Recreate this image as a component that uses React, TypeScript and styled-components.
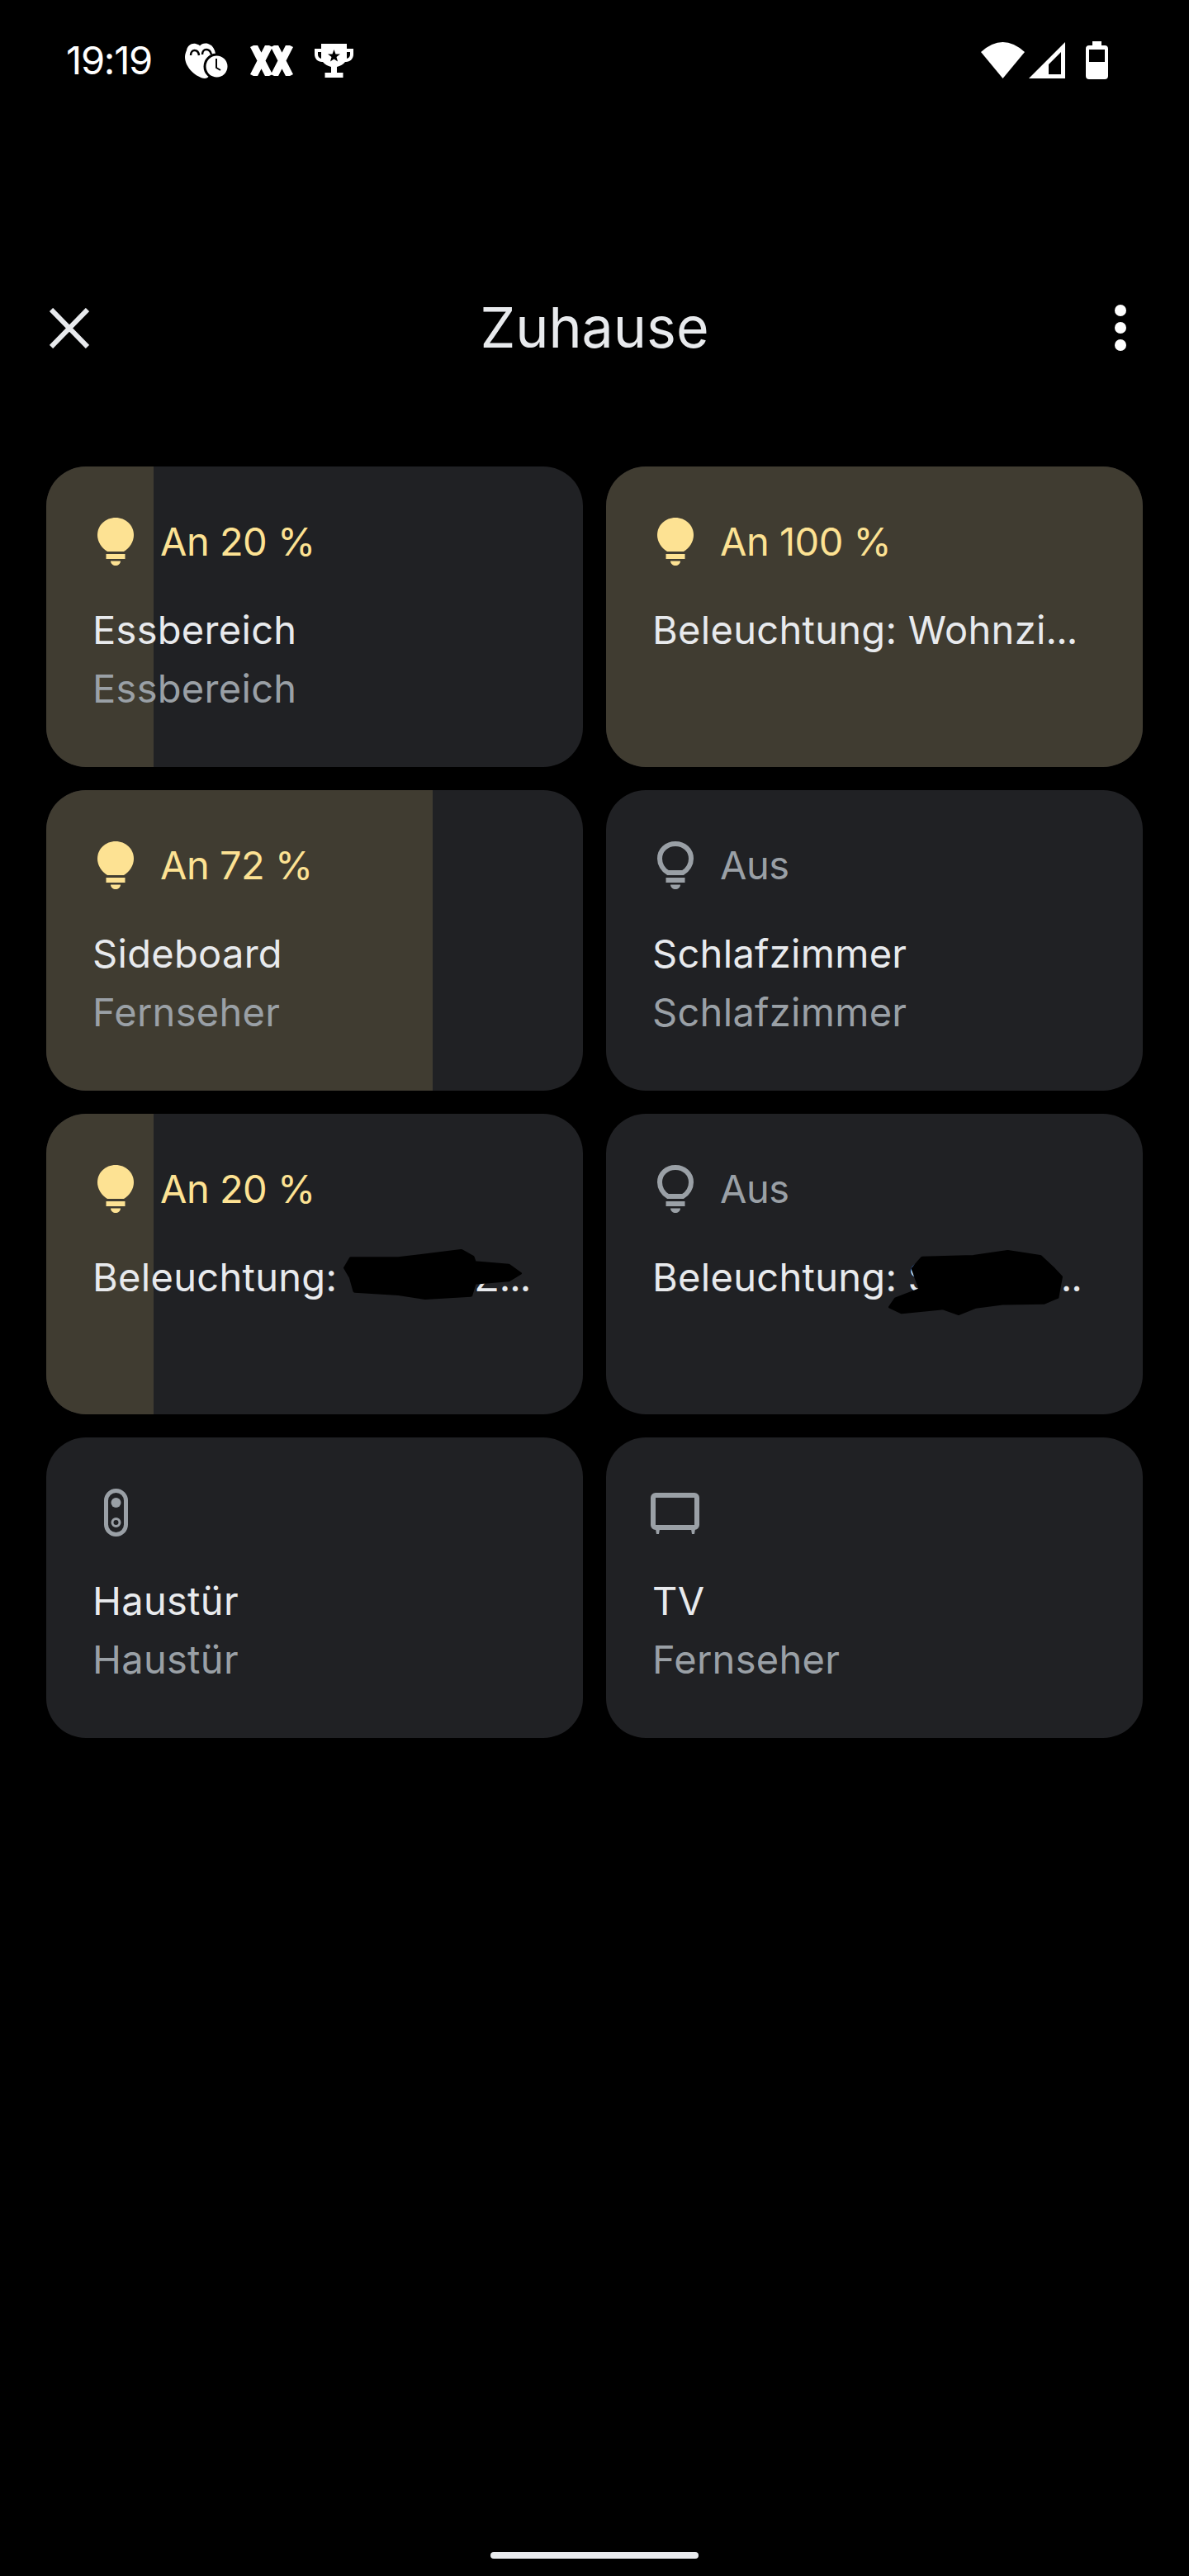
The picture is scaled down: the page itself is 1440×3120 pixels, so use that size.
import React, { FC, ReactNode } from 'react';
import styled, { createGlobalStyle } from 'styled-components';

const GlobalStyle = createGlobalStyle`
    html, body {
        margin: 0;
        padding: 0;
        background: #000;
    }
    body {
        font-family: Inter, Roboto, sans-serif;
    }
`;

const Page = styled.div`
    width: 1440px;
    height: 3120px;
    display: flex;
    flex-direction: column;
    background: #000;
    overflow: hidden;
`;

const StatusBar = styled.div`
    height: 146px;
    display: flex;
    align-items: center;
    justify-content: space-between;
    padding: 0 98px 0 80px;
    flex-shrink: 0;
`;

const StatusGroup = styled.div`
    display: flex;
    align-items: center;
    gap: 26px;
`;

const SystemIcons = styled.div`
    display: flex;
    align-items: center;
    gap: 5px;

    svg:last-child {
        margin-left: 20px;
    }
`;

const Time = styled.span`
    font-size: 47px;
    line-height: 48px;
    letter-spacing: -1.2px;
    color: #fff;
    width: 105px;
    margin-right: 13px;
    white-space: nowrap;
`;

const Header = styled.header`
    height: 120px;
    margin: 191px 0 108px;
    padding: 0 60px;
    display: grid;
    grid-template-columns: 1fr auto 1fr;
    align-items: center;
`;

const Title = styled.h1`
    margin: 0 0 2px;
    font-size: 68px;
    line-height: 118px;
    font-weight: 400;
    color: #e8eaed;
`;

const MenuDots = styled.div`
    justify-self: end;
    margin-right: 16px;
    display: flex;
    flex-direction: column;
    gap: 7px;
`;

const Dot = styled.span`
    width: 14px;
    height: 14px;
    border-radius: 50%;
    background: #fff;
`;

const Grid = styled.div`
    display: grid;
    grid-template-columns: 650px 650px;
    grid-auto-rows: 364px;
    gap: 28px;
    padding: 0 56px;
`;

const CardBox = styled.div`
    position: relative;
    overflow: hidden;
    border-radius: 48px;
    background: #202124;
`;

const LevelFill = styled.div<{ $level: number }>`
    position: absolute;
    top: 0;
    bottom: 0;
    left: 0;
    width: ${p => p.$level}%;
    background: #403c31;
`;

const CardContent = styled.div`
    position: relative;
    display: flex;
    flex-direction: column;
    padding: 55px 56px 0;
`;

const StateRow = styled.div`
    height: 72px;
    display: flex;
    align-items: center;
    gap: 16px;
    margin-bottom: 35px;

    svg {
        margin-left: -6px;
        flex-shrink: 0;
    }
`;

const StateText = styled.span<{ $on: boolean }>`
    font-size: 47px;
    line-height: 72px;
    letter-spacing: -0.5px;
    color: ${p => (p.$on ? '#fde293' : '#9aa0a6')};
    white-space: nowrap;
`;

const Name = styled.div`
    font-size: 47px;
    line-height: 71px;
    letter-spacing: 0.3px;
    color: #e8eaed;
    white-space: nowrap;
`;

const Room = styled(Name)`
    color: #9aa0a6;
`;

const Dots = styled.span`
    letter-spacing: -1px;
`;

const RedactedGap = styled.span<{ $width: number }>`
    display: inline-block;
    width: ${p => p.$width}px;
`;

const Scribble = styled.svg<{ $left: number; $top: number }>`
    position: absolute;
    left: ${p => p.$left}px;
    top: ${p => p.$top}px;
    overflow: visible;
`;

const HomeBar = styled.div`
    width: 252px;
    height: 8px;
    border-radius: 4px;
    background: #e8eaed;
    margin: auto auto 21px;
    flex-shrink: 0;
`;

const Tile: FC<{ size: number; children: ReactNode }> = ({ size, children }) => (
    <svg width={size} height="72" viewBox={`-8 0 ${size} 72`}>{children}</svg>
);

const BulbOn = () => (
    <Tile size={72}>
        <g fill="#fde293">
            <path d="M16 48C9 44 4 36 4 28C4 16 14 7 26 7C38 7 48 16 48 28C48 36 43 44 36 48Z" />
            <rect x="14.5" y="51" width="23" height="6" />
            <path d="M20 59.5H32C32 63 29 65 26 65C23 65 20 63 20 59.5Z" />
        </g>
    </Tile>
);

const BulbOff = () => (
    <Tile size={72}>
        <path
            d="M17 45C11 41.500 7 35 7 28C7 17.500 15.500 10 26 10C36.500 10 45 17.500 45 28C45 35 41 41.500 35 45Z"
            fill="none"
            stroke="#9aa0a6"
            strokeWidth="6"
        />
        <g fill="#9aa0a6">
            <rect x="14.5" y="51" width="23" height="6" />
            <path d="M20 59.500H32C32 63 29 65 26 65C23 65 20 63 20 59.500Z" />
        </g>
    </Tile>
);

const RemoteIcon = () => (
    <Tile size={72}>
        <rect x="14.500" y="9.500" width="24" height="53" rx="12" fill="none" stroke="#9aa0a6" strokeWidth="5" />
        <circle cx="26.500" cy="24" r="6" fill="#9aa0a6" />
        <circle cx="26.500" cy="48" r="4.500" fill="none" stroke="#9aa0a6" strokeWidth="3" />
    </Tile>
);

const TvIcon = () => (
    <Tile size={72}>
        <rect x="-1" y="15" width="53" height="39" rx="3" fill="none" stroke="#9aa0a6" strokeWidth="6" />
        <path d="M2 56H7L6 62H3ZM45 56H50L49 62H46Z" fill="#9aa0a6" />
    </Tile>
);

const CloseIcon = () => (
    <svg width="48" height="49" viewBox="0 0 48 49">
        <path d="M2 2L46 47M46 2L2 47" stroke="#e8eaed" strokeWidth="6" fill="none" />
    </svg>
);

const AlarmFaceIcon = () => (
    <svg width="53" height="43" viewBox="0 0 53 43">
        <path
            d="M2 9C3 3 8 0 13 1C15 1.500 17 2 18 3.500C20 1 24 0 28 1C33 2.500 36 7 37 13C40 20 36 30 33 35C31 39 28 43 24 43C14 42 0 30 0 17C0 14 1 11 2 9Z"
            fill="#fff"
        />
        <path d="M7 15C7 7 16 7 17 15M21 14C21 6 30 6 32 14" fill="none" stroke="#000" strokeWidth="2.500" />
        <circle cx="38.500" cy="28.500" r="14.500" fill="#fff" stroke="#000" strokeWidth="3" />
        <path d="M38 19V30L43 33" fill="none" stroke="#000" strokeWidth="2" />
    </svg>
);

const DoubleXIcon = () => (
    <svg width="52" height="37" viewBox="0 0 52 37">
        <path d="M4 0L23 37M23 0L4 37M29 0L48 37M48 0L29 37" stroke="#fff" strokeWidth="9" fill="none" />
    </svg>
);

const TrophyIcon = () => (
    <svg width="47" height="41" viewBox="0 0 47 41">
        <path
            fillRule="evenodd"
            fill="#fff"
            d="M8 0H39V6H47V13C47 18 43 22 38 22H37C35 25 31 27 27 28V35H34.500V41H12.500V35H20V28C16 27 12 25 10 22H9C4 22 0 18 0 13V6H8ZM4 10V13C4 15.500 5.500 17.500 8 18V10ZM39 10V18C41.500 17.500 43 15.500 43 13V10ZM23.500 7L25.500 12.500H31L26.500 16L28 21.500L23.500 18.500L19 21.500L20.500 16L16 12.500H21.500Z"
        />
    </svg>
);

const WifiIcon = () => (
    <svg width="53" height="44" viewBox="0 0 53 44">
        <path d="M0 12Q26.500 -12 53 12L26.500 44Z" fill="#fff" />
    </svg>
);

const SignalIcon = () => (
    <svg width="44" height="44" viewBox="0 0 44 44">
        <path fillRule="evenodd" fill="#fff" d="M44 0V44H0ZM39 12L24 27V39H39Z" />
    </svg>
);

const BatteryIcon = () => (
    <svg width="27" height="46" viewBox="0 0 27 46">
        <path
            fillRule="evenodd"
            fill="#fff"
            d="M8 0H19V5H23C25.500 5 27 6.500 27 9V42C27 44.500 25.500 46 23 46H4C1.500 46 0 44.500 0 42V9C0 6.500 1.500 5 4 5H8ZM4 10V25H23V10Z"
        />
    </svg>
);

interface CardProps {
    icon: ReactNode;
    state?: string;
    level?: number;
    name: ReactNode;
    room?: string;
    overlay?: ReactNode;
}

const Card: FC<CardProps> = ({ icon, state, level, name, room, overlay }) => (
    <CardBox>
        {level ? <LevelFill $level={level} /> : null}
        <CardContent>
            <StateRow>
                {icon}
                {state && <StateText $on={!!level}>{state}</StateText>}
            </StateRow>
            <Name>{name}</Name>
            {room && <Room>{room}</Room>}
        </CardContent>
        {overlay}
    </CardBox>
);

const App: FC = () => (
    <Page>
        <GlobalStyle />
        <StatusBar>
            <StatusGroup>
                <Time>19:19</Time>
                <AlarmFaceIcon />
                <DoubleXIcon />
                <TrophyIcon />
            </StatusGroup>
            <SystemIcons>
                <WifiIcon />
                <SignalIcon />
                <BatteryIcon />
            </SystemIcons>
        </StatusBar>

        <Header>
            <CloseIcon />
            <Title>Zuhause</Title>
            <MenuDots>
                <Dot />
                <Dot />
                <Dot />
            </MenuDots>
        </Header>

        <Grid>
            <Card icon={<BulbOn />} state="An 20 %" level={20} name="Essbereich" room="Essbereich" />
            <Card icon={<BulbOn />} state="An 100 %" level={100} name={<>Beleuchtung: Wohnzi<Dots>...</Dots></>} />
            <Card icon={<BulbOn />} state="An 72 %" level={72} name="Sideboard" room="Fernseher" />
            <Card icon={<BulbOff />} state="Aus" name="Schlafzimmer" room="Schlafzimmer" />
            <Card
                icon={<BulbOn />}
                state="An 20 %"
                level={20}
                name={<>Beleuchtung: <RedactedGap $width={153} />Z<Dots>...</Dots></>}
                overlay={
                    <Scribble $left={360} $top={164} width="216" height="61" viewBox="905 522 470 183" preserveAspectRatio="none">
                        <polygon
                            points="925,555 1050,555 1215,527 1245,550 1250,570 1340,580 1370,610 1340,635 1250,645 1240,690 1120,700 1050,685 935,675 925,625 910,590"
                            fill="#000"
                            stroke="#000"
                            strokeWidth="10"
                            strokeLinejoin="round"
                        />
                    </Scribble>
                }
            />
            <Card
                icon={<BulbOff />}
                state="Aus"
                name={<>Beleuchtung: S<RedactedGap $width={142} /><Dots>...</Dots></>}
                overlay={
                    <Scribble $left={342} $top={165} width="211" height="79" viewBox="775 522 460 238" preserveAspectRatio="none">
                        <polygon
                            points="865,550 1000,545 1090,527 1175,545 1210,590 1230,620 1220,695 1185,715 1080,717 1005,730 960,755 920,735 810,750 780,730 795,700 860,665 840,590"
                            fill="#000"
                            stroke="#000"
                            strokeWidth="10"
                            strokeLinejoin="round"
                        />
                    </Scribble>
                }
            />
            <Card icon={<RemoteIcon />} name="Haustür" room="Haustür" />
            <Card icon={<TvIcon />} name="TV" room="Fernseher" />
        </Grid>

        <HomeBar />
    </Page>
);

export default App;
